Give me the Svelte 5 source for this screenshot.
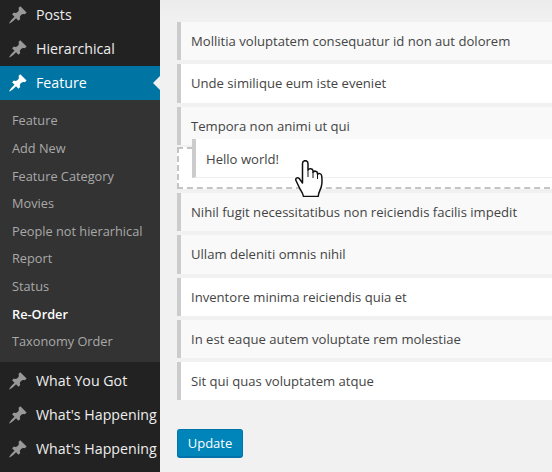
<script lang="ts">
  const PIN =
    'M10.44 3.02l1.82-1.82 6.36 6.35-1.83 1.82c-1.05-.68-2.48-.57-3.41.36l-.75.75c-.92.93-1.04 2.35-.35 3.41l-1.83 1.82-2.41-2.41-2.8 2.79c-.42.42-3.38 2.71-3.8 2.29s1.86-3.39 2.28-3.81l2.79-2.79L4.1 9.36l1.83-1.82c1.05.69 2.48.57 3.4-.36l.75-.75c.93-.92 1.05-2.35.36-3.41z'

  const submenu = [
    'Feature',
    'Add New',
    'Feature Category',
    'Movies',
    'People not hierarhical',
    'Report',
    'Status',
    'Re-Order',
    'Taxonomy Order',
  ]
  const above = [
    { title: 'Mollitia voluptatem consequatur id non aut dolorem', white: false },
    { title: 'Unde similique eum iste eveniet', white: true },
    { title: 'Tempora non animi ut qui', white: false },
  ]
  const below = [
    { title: 'Nihil fugit necessitatibus non reiciendis facilis impedit', white: false },
    { title: 'Ullam deleniti omnis nihil', white: false },
    { title: 'Inventore minima reiciendis quia et', white: true },
    { title: 'In est eaque autem voluptate rem molestiae', white: false },
    { title: 'Sit qui quas voluptatem atque', white: true },
  ]
</script>

{#snippet menuItem(label: string, current = false)}
  <a class="menu-item" class:current href="#top">
    <svg class="pin" viewBox="0 0 20 20" width="20" height="20"><path d={PIN} /></svg>
    <span>{label}</span>
  </a>
{/snippet}

<div class="page">
  <aside class="sidebar">
    {@render menuItem('Posts')}
    {@render menuItem('Hierarchical')}
    {@render menuItem('Feature', true)}
    <ul class="submenu">
      {#each submenu as item}
        <li class:active={item === 'Re-Order'}>{item}</li>
      {/each}
    </ul>
    {@render menuItem('What You Got')}
    {@render menuItem("What's Happening")}
    {@render menuItem("What's Happening")}
  </aside>

  <main class="content">
    <div class="list">
      {#each above as row}
        <div class="row" class:white={row.white}>{row.title}</div>
      {/each}
      <div class="placeholder">
        <div class="row white dragged">Hello world!</div>
        <svg class="hand" viewBox="0 0 28 37" width="28" height="37">
          <path
            d="M7.5 23V3.500c0-3.800 5.500-3.800 5.500 0V10c.8-2 4.800-1.800 5 .8v1.500c.8-1.800 4.300-1.500 4.500.8v1.200c1-1.300 4-1 4.200 1.700.5 4 .4 8-.5 11-.7 2.500-2.700 5-3 9.500H8.500c-.5-3-2-5-3.500-7.500L1.200 21c-1.500-2.800 1.300-4 3-2.500z"
          />
          <path class="crease" d="M13 10v7M18 12v6M22.500 14v5" />
        </svg>
      </div>
      {#each below as row}
        <div class="row" class:white={row.white}>{row.title}</div>
      {/each}
    </div>
    <button class="update" type="button">Update</button>
  </main>
</div>

<style>
  :global(body) {
    margin: 0;
    background: #f1f1f1;
  }

  .page {
    display: flex;
    width: 552px;
    height: 472px;
    overflow: hidden;
    font-family: 'Open Sans', sans-serif;
  }

  .sidebar {
    flex: 0 0 160px;
    width: 160px;
    margin-top: -2px;
    background: #222;
    overflow: hidden;
  }

  .menu-item {
    position: relative;
    display: flex;
    align-items: center;
    height: 34px;
    padding-left: 8px;
    gap: 8px;
    font-size: 14.2px;
    color: #eee;
    text-decoration: none;
    white-space: nowrap;
  }

  .menu-item span {
    margin-bottom: 2px;
  }

  .pin {
    flex: none;
    fill: #999;
  }

  .menu-item.current {
    background: #0074a2;
    color: #fff;
  }

  .menu-item.current .pin {
    fill: #fff;
  }

  .menu-item.current::after {
    content: '';
    position: absolute;
    right: 0;
    top: 50%;
    margin-top: -7px;
    border: 7px solid transparent;
    border-right-color: #f1f1f1;
    border-left-width: 0;
  }

  .submenu {
    list-style: none;
    margin: 0 0 2px;
    padding: 7.4px 0 6.6px 12px;
    background: #333;
    font-size: 12.75px;
    line-height: 27.6px;
    color: #a9a9a9;
  }

  .submenu .active {
    color: #fff;
    font-weight: 600;
  }

  .content {
    flex: 1;
    min-width: 0;
    padding: 22px 0 0 17px;
    background: linear-gradient(#ececec, #f1f1f1 22px);
  }

  .list {
    display: flex;
    flex-direction: column;
    gap: 4px;
    margin-right: -8px;
  }

  .row {
    box-sizing: border-box;
    height: 38.25px;
    padding-left: 10px;
    border-left: 4px solid #ccc;
    background: #f9f9f9;
    font-size: 13.1px;
    line-height: 38.25px;
    color: #444;
    white-space: nowrap;
  }

  .row.white {
    background: #fff;
  }

  .placeholder {
    position: relative;
    box-sizing: border-box;
    height: 42px;
    margin-top: -1.75px;
    border: 2px dashed #c4c4c4;
    background: #fff;
  }

  .dragged {
    position: absolute;
    left: 13px;
    right: -2px;
    top: -10px;
    height: 39px;
    border-bottom: 1px solid #eee;
    line-height: 40px;
  }

  .hand {
    position: absolute;
    left: 116px;
    top: 11px;
    fill: #fff;
    stroke: #111;
    stroke-width: 1.500;
    stroke-linejoin: round;
  }

  .crease {
    fill: none;
    stroke-width: 1;
  }

  .update {
    display: block;
    height: 29px;
    width: 66px;
    margin-top: 29px;
    padding: 0;
    border: 1px solid #0073aa;
    border-bottom-width: 2px;
    border-radius: 3px;
    background: #0085ba;
    color: #fff;
    font: 13px 'Open Sans', sans-serif;
  }
</style>
